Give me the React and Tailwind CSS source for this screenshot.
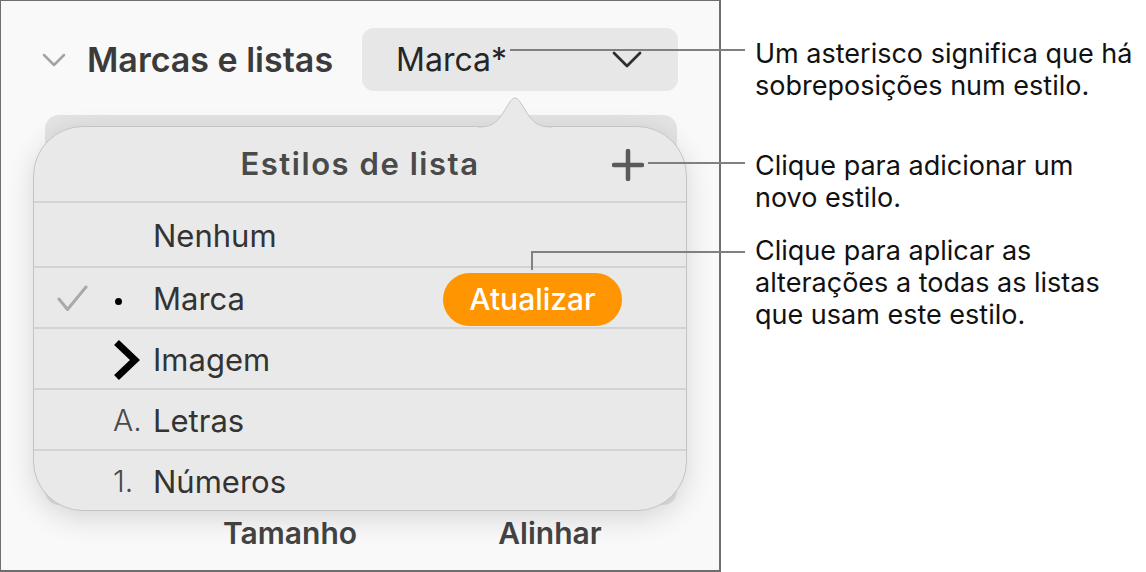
import React from 'react';

// Small stroked glyphs used in the inspector
const ChevronDown = ({ className, w, h, stroke, sw }) => (
  <svg className={className} width={w} height={h} viewBox={`0 0 ${w} ${h}`} fill="none">
    <path d={`M2 2 L${w / 2} ${h - 2} L${w - 2} 2`} stroke={stroke} strokeWidth={sw} strokeLinecap="round" strokeLinejoin="round" />
  </svg>
);

const PlusIcon = () => (
  <svg width="32" height="32" viewBox="0 0 32 32" fill="none">
    <path d="M16 2 V30 M2 16 H30" stroke="#5a5a5a" strokeWidth="4.5" strokeLinecap="round" />
  </svg>
);

const CheckIcon = () => (
  <svg width="31" height="27" viewBox="0 0 31 27" fill="none">
    <path d="M2 14 L10.5 24.5 L29 2" stroke="#a9a9a9" strokeWidth="3" strokeLinecap="round" strokeLinejoin="round" />
  </svg>
);

const ImageBullet = () => (
  <svg width="27" height="42" viewBox="0 0 27 42" fill="none">
    <path d="M3.5 3.5 L22 21 L3.5 38.5" stroke="#000" strokeWidth="7" strokeLinejoin="miter" />
  </svg>
);

const styles = [
  { name: 'Nenhum', h: 'h-[65px]' },
  { name: 'Marca', h: 'h-[61px]', checked: true, marker: 'dot', update: true },
  { name: 'Imagem', h: 'h-[61px]', marker: 'image' },
  { name: 'Letras', h: 'h-[61px]', marker: 'A.' },
  { name: 'Números', h: 'h-[61px]', marker: '1.' },
];

const Marker = ({ type }) => {
  if (type === 'dot') return <span className="ml-[2px] mt-[6px] block h-[7px] w-[7px] rounded-full bg-black" />;
  if (type === 'image') return <ImageBullet />;
  if (type) return <span className="text-[30px] font-light text-[#4a4a4a]">{type}</span>;
  return null;
};

function ListStylesPopover() {
  return (
    <div className="absolute left-[32px] top-[125px] h-[385px] w-[654px] rounded-[50px] border border-[#c4c4c4] bg-[#e9e9e9] shadow-[0_8px_28px_rgba(0,0,0,0.14)]">
      {/* pointer toward the style menu */}
      <svg className="absolute left-[444px] top-[-30px]" width="74" height="33" viewBox="0 0 74 33" fill="none">
        <path d="M0 30 C12 30 18 27 25 16 C31 6 34 1 37 1 C40 1 43 6 49 16 C56 27 62 30 74 30 L74 33 L0 33 Z" fill="#e9e9e9" />
        <path d="M0 30 C12 30 18 27 25 16 C31 6 34 1 37 1 C40 1 43 6 49 16 C56 27 62 30 74 30" stroke="#c4c4c4" strokeWidth="1" />
      </svg>

      <div className="grid h-[74px] grid-cols-[1fr_auto_1fr] items-center">
        <span />
        <span className="text-[31px] font-semibold tracking-[0.05em] text-[#4a4a4a]">Estilos de lista</span>
        <span className="justify-self-end pr-[42px] pt-[2px]">
          <PlusIcon />
        </span>
      </div>

      {styles.map((s) => (
        <div key={s.name} className={`flex items-center border-t-2 border-[#d3d3d3] ${s.h}`}>
          <div className="flex w-[79px] items-center pl-[23px] pt-[2px]">{s.checked && <CheckIcon />}</div>
          <div className="flex w-[40px] items-center pt-[2px]">
            <Marker type={s.marker} />
          </div>
          <span className="pt-[4px] text-[31px] text-[#333]">{s.name}</span>
          {s.update && (
            <button className="ml-auto mr-[64px] mt-[4px] h-[53px] w-[179px] rounded-full bg-[#ff9500] text-[30px] font-medium text-white">
              Atualizar
            </button>
          )}
        </div>
      ))}
    </div>
  );
}

export default function App() {
  return (
    <div className="relative flex h-[572px] w-[1146px] bg-white font-['Inter',sans-serif]">
      {/* Inspector panel */}
      <div className="relative flex h-full w-[721px] shrink-0 flex-col border-b-2 border-l border-r-2 border-t border-[#6e6e6e] bg-[#f9f9f9]">
        <div className="flex items-center pt-[27px]">
          <ChevronDown className="ml-[41px]" w={24} h={14} stroke="#a3a3a3" sw={2.5} />
          <span className="ml-[21px] text-[34px] font-semibold text-[#3b3b3b]">Marcas e listas</span>
          <div className="ml-auto mr-[41px] flex h-[63px] w-[316px] items-center justify-between rounded-[12px] bg-[#e7e7e7] pl-[34px] pr-[36px]">
            <span className="text-[32px] text-[#262626]">Marca*</span>
            <ChevronDown w={30} h={17} stroke="#2e2e2e" sw={2.8} />
          </div>
        </div>

        {/* section card sitting behind the popover */}
        <div className="absolute left-[44px] right-[42px] top-[114px] h-[390px] rounded-[14px] bg-[#e3e3e3]" />

        <ListStylesPopover />

        <div className="mt-auto flex pb-[21px] text-[30px] font-semibold leading-[32px] text-[#444]">
          <span className="ml-[189px] w-[200px] text-center">Tamanho</span>
          <span className="ml-[60px] w-[200px] text-center">Alinhar</span>
        </div>
      </div>

      {/* Callouts */}
      <div className="flex flex-col pl-[34px] pt-[38px] text-[27px] leading-[32px] text-[#111]">
        <p>
          Um asterisco significa que há
          <br />
          sobreposições num estilo.
        </p>
        <p className="mt-[48px]">
          Clique para adicionar um
          <br />
          novo estilo.
        </p>
        <p className="mt-[21px]">
          Clique para aplicar as
          <br />
          alterações a todas as listas
          <br />
          que usam este estilo.
        </p>
      </div>

      {/* Leader lines */}
      <div className="absolute left-[510px] top-[49px] h-[2px] w-[235px] bg-[#808080]" />
      <div className="absolute left-[648px] top-[162px] h-[2px] w-[97px] bg-[#808080]" />
      <div className="absolute left-[531px] top-[251px] h-[2px] w-[214px] bg-[#808080]" />
      <div className="absolute left-[531px] top-[251px] h-[19px] w-[2px] bg-[#808080]" />
    </div>
  );
}
